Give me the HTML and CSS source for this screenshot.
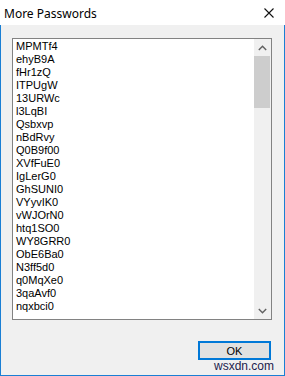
FILE: index.html
```html
<!DOCTYPE html>
<html>
<head lang="en">
    <meta charset="UTF-8">
    <title>More Passwords</title>
    <link rel="stylesheet" href="styles.css">
</head>
<body>
<div class="window">
    <div class="titlebar">
        <span class="title">More Passwords</span>
        <svg class="close" width="10" height="10" viewBox="0 0 10 10">
            <path d="M0.5 0.5 L9.5 9.5 M9.5 0.5 L0.5 9.5" stroke="#111" stroke-width="1.1" fill="none"/>
        </svg>
    </div>
    <div class="client">
        <div class="listbox">
            <ul class="items">
                <li>MPMTf4</li>
                <li>ehyB9A</li>
                <li>fHr1zQ</li>
                <li>ITPUgW</li>
                <li>13URWc</li>
                <li>l3LqBI</li>
                <li>Qsbxvp</li>
                <li>nBdRvy</li>
                <li>Q0B9f00</li>
                <li>XVfFuE0</li>
                <li>IgLerG0</li>
                <li>GhSUNI0</li>
                <li>VYyvIK0</li>
                <li>vWJOrN0</li>
                <li>htq1SO0</li>
                <li>WY8GRR0</li>
                <li>ObE6Ba0</li>
                <li>N3ff5d0</li>
                <li>q0MqXe0</li>
                <li>3qaAvf0</li>
                <li>nqxbci0</li>
            </ul>
            <div class="scrollbar">
                <div class="arrow">
                    <svg width="9" height="6" viewBox="0 0 9 6"><path d="M0.8 5 L4.5 1.3 L8.2 5" stroke="#606060" stroke-width="1.4" fill="none"/></svg>
                </div>
                <div class="track">
                    <div class="thumb"></div>
                </div>
                <div class="arrow">
                    <svg width="9" height="6" viewBox="0 0 9 6"><path d="M0.8 1 L4.5 4.7 L8.2 1" stroke="#606060" stroke-width="1.4" fill="none"/></svg>
                </div>
            </div>
        </div>
        <div class="buttons">
            <button class="btn">OK</button>
        </div>
        <span class="watermark">wsxdn.com</span>
    </div>
</div>
</body>
</html>
```

FILE: styles.css
```css
* {
    padding: 0;
    margin: 0;
    list-style: none;
    box-sizing: border-box;
}
body {
    width: 285px;
    height: 376px;
    overflow: hidden;
    background: #fff;
}
.window {
    width: 285px;
    height: 376px;
    display: flex;
    flex-direction: column;
}
.titlebar {
    height: 25px;
    background: #fff;
    display: flex;
    align-items: center;
    justify-content: space-between;
    padding: 0 11px 0 4px;
}
.title {
    font-family: "Noto Sans", sans-serif;
    font-size: 12px;
    color: #000;
    margin-top: 1px;
}
.close {
    display: block;
    margin-top: 1px;
}
.client {
    flex: 1;
    position: relative;
    background: #f0f0f0;
    border: 1px solid #1a7fd4;
    border-top: none;
    padding: 13px 12px 0 11px;
    display: flex;
    flex-direction: column;
}
.listbox {
    height: 282px;
    border: 1px solid #828282;
    background: #fff;
    display: flex;
    overflow: hidden;
}
.items {
    flex: 1;
    padding: 1px 0 0 3px;
    overflow: hidden;
    font-family: "Liberation Sans", Arial, sans-serif;
    font-size: 11px;
    line-height: 13px;
    color: #000;
}
.scrollbar {
    width: 17px;
    background: #f0f0f0;
    display: flex;
    flex-direction: column;
}
.arrow {
    height: 17px;
    display: flex;
    align-items: center;
    justify-content: center;
}
.track {
    flex: 1;
}
.thumb {
    height: 52px;
    margin: 0 1px 0 0;
    background: #cdcdcd;
}
.buttons {
    display: flex;
    justify-content: flex-end;
    padding: 21px 1px 0 0;
}
.btn {
    width: 73px;
    height: 19px;
    border: 2px solid #0078d7;
    background: #e1e1e1;
    font-family: "Liberation Sans", Arial, sans-serif;
    font-size: 11px;
    color: #000;
}
.watermark {
    position: absolute;
    right: 10px;
    bottom: 2px;
    font-family: "Liberation Sans", Arial, sans-serif;
    font-size: 12px;
    color: #1c1c4c;
}
```
